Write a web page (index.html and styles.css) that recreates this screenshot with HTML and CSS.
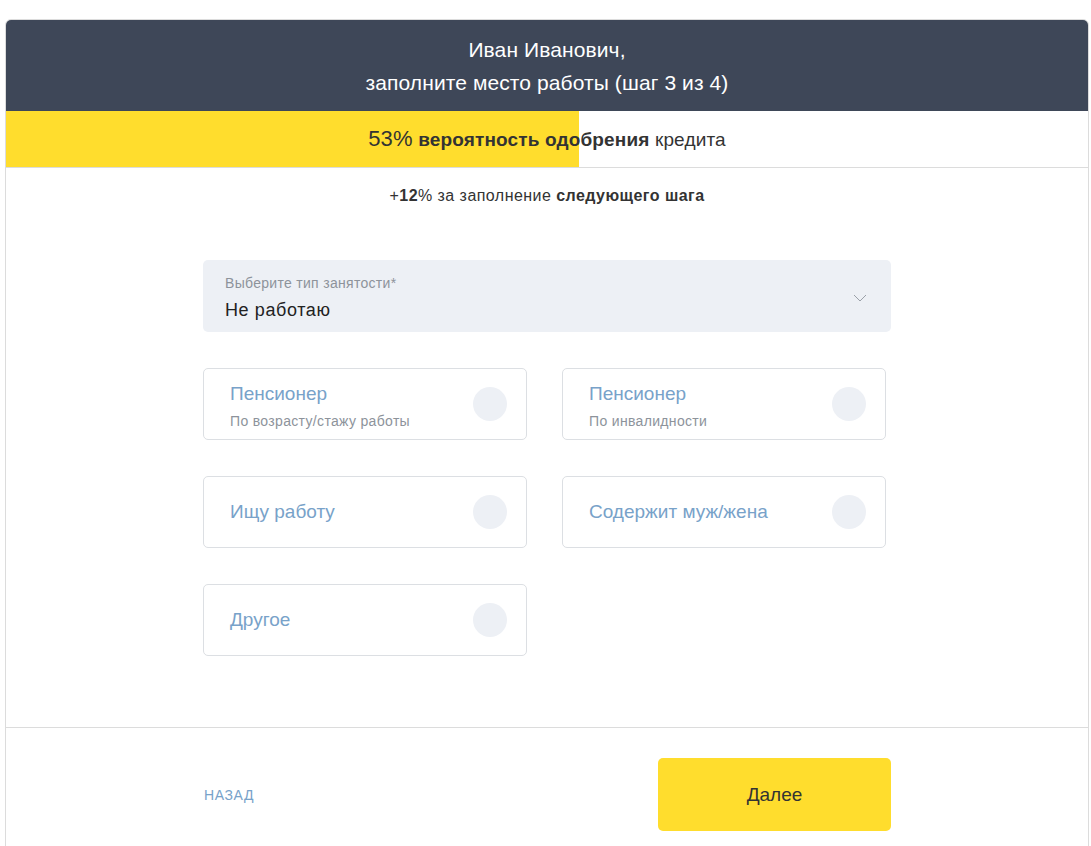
FILE: index.html
```html
<!DOCTYPE html>
<html lang="ru">
<head>
<meta charset="utf-8">
<title>Место работы</title>
<link rel="stylesheet" href="styles.css">
</head>
<body>
<div class="card">
  <div class="header">
    <div>Иван Иванович,</div>
    <div>заполните место работы (шаг 3 из 4)</div>
  </div>
  <div class="progress">
    <div class="progress-fill" style="width:53%"></div>
    <div class="progress-text"><span class="pct">53%</span> <b>вероятность одобрения</b> кредита</div>
  </div>
  <div class="body">
    <div class="hint">+<b>12</b>% за заполнение <b>следующего шага</b></div>
    <div class="form">
      <div class="select">
        <div class="select-text">
          <div class="select-label">Выберите тип занятости*</div>
          <div class="select-value">Не работаю</div>
        </div>
        <svg class="chevron" width="14" height="8" viewBox="0 0 14 8"><path d="M1 1l6 6 6-6" fill="none" stroke="#9aa0a8" stroke-width="1"/></svg>
      </div>
      <div class="tiles">
        <div class="tile">
          <div class="tile-text two">
            <div class="tile-title">Пенсионер</div>
            <div class="tile-sub">По возрасту/стажу работы</div>
          </div>
          <span class="radio"></span>
        </div>
        <div class="tile">
          <div class="tile-text two">
            <div class="tile-title">Пенсионер</div>
            <div class="tile-sub">По инвалидности</div>
          </div>
          <span class="radio"></span>
        </div>
        <div class="tile">
          <div class="tile-text"><div class="tile-title">Ищу работу</div></div>
          <span class="radio"></span>
        </div>
        <div class="tile">
          <div class="tile-text"><div class="tile-title">Содержит муж/жена</div></div>
          <span class="radio"></span>
        </div>
        <div class="tile">
          <div class="tile-text"><div class="tile-title">Другое</div></div>
          <span class="radio"></span>
        </div>
      </div>
    </div>
  </div>
  <div class="footer">
    <div class="footer-inner">
      <a class="back">НАЗАД</a>
      <button class="next">Далее</button>
    </div>
  </div>
</div>
</body>
</html>
```
FILE: styles.css
```css
html, body {
  margin: 0;
  padding: 0;
  background: #fff;
  font-family: "Liberation Sans", Arial, sans-serif;
  color: #333;
}
.card {
  margin: 19px 2px 0 5px;
  border: 1px solid #dcdcdc;
  border-radius: 6px 6px 0 0;
  overflow: hidden;
  height: 900px;
}
.header {
  background: #3e4758;
  color: #fff;
  text-align: center;
  font-size: 21px;
  line-height: 33px;
  letter-spacing: 0.1px;
  padding: 13px 0 12px;
}
.progress {
  position: relative;
  height: 56px;
  border-bottom: 1px solid #dcdcdc;
  display: flex;
  align-items: center;
  justify-content: center;
}
.progress-fill {
  position: absolute;
  left: 0;
  top: 0;
  bottom: 0;
  background: #ffdd2d;
}
.progress-text {
  position: relative;
  font-size: 19px;
  letter-spacing: 0.15px;
  color: #333;
}
.progress-text .pct {
  font-size: 22px;
}
.body {
  padding-top: 18px;
}
.hint {
  text-align: center;
  font-size: 16px;
  letter-spacing: 0.45px;
  line-height: 20px;
  color: #333;
}
.form {
  width: 688px;
  margin: 54px auto 0;
}
.select {
  height: 72px;
  box-sizing: border-box;
  background: #edf0f5;
  border-radius: 5px;
  padding: 14px 24px 0 22px;
  display: flex;
  justify-content: space-between;
}
.select-label {
  font-size: 14px;
  letter-spacing: 0.3px;
  line-height: 18px;
  color: #8d939b;
}
.select-value {
  font-size: 18px;
  letter-spacing: 0.6px;
  line-height: 22px;
  margin-top: 7px;
  color: #222;
}
.chevron {
  margin-top: 20px;
}
.tiles {
  margin-top: 36px;
  display: grid;
  grid-template-columns: 324px 324px;
  column-gap: 35px;
  row-gap: 36px;
}
.tile {
  height: 72px;
  box-sizing: border-box;
  border: 1px solid #dcdfe3;
  border-radius: 5px;
  padding: 0 19px 0 26px;
  display: flex;
  align-items: center;
  justify-content: space-between;
}
.tile-text.two {
  padding-top: 4px;
}
.tile-title {
  font-size: 19px;
  line-height: 22px;
  color: #78a2c9;
}
.tile-sub {
  font-size: 14px;
  letter-spacing: 0.33px;
  line-height: 18px;
  color: #8d939b;
  margin-top: 7px;
}
.radio {
  width: 34px;
  height: 34px;
  border-radius: 50%;
  background: #edf0f5;
}
.footer {
  margin-top: 71px;
  border-top: 1px solid #dcdcdc;
  padding-top: 30px;
}
.footer-inner {
  width: 688px;
  margin: 0 auto;
  display: flex;
  justify-content: space-between;
  align-items: center;
}
.back {
  font-size: 14px;
  letter-spacing: 0.6px;
  color: #78a2c9;
  margin-left: 1px;
}
.next {
  width: 233px;
  height: 73px;
  border: none;
  border-radius: 5px;
  background: #ffdd2d;
  font-family: "Liberation Sans", Arial, sans-serif;
  font-size: 19px;
  color: #333;
}
```
